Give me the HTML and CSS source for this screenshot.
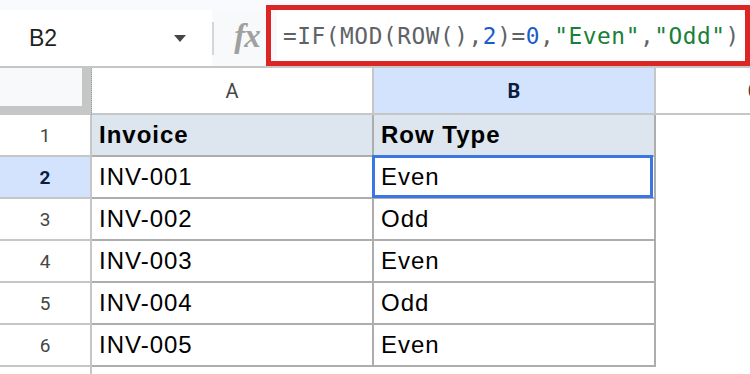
FILE: index.html
```html
<!DOCTYPE html>
<html lang="en">
<head>
    <meta charset="UTF-8">
    <meta name="viewport" content="width=device-width, initial-scale=1.0">
    <title>Row Type Formula</title>
    <link rel="stylesheet" href="styles.css">
</head>
<body>
    <div class="formula-bar">
        <div class="name-box">
            <span class="cell-ref">B2</span>
            <span class="caret"></span>
        </div>
        <div class="divider"></div>
        <div class="fx">fx</div>
        <div class="formula">
            <div class="formula-input">=IF(MOD(ROW(),<span class="num">2</span>)=<span class="num">0</span>,<span class="str">"Even"</span>,<span class="str">"Odd"</span>)</div>
        </div>
    </div>

    <div class="sheet">
        <div class="corner"><div class="corner-inner"></div></div>
        <div class="col-head">A</div>
        <div class="col-head active">B</div>
        <div class="col-head">C</div>

        <div class="row-head">1</div>
        <div class="cell title">Invoice</div>
        <div class="cell title">Row Type</div>
        <div class="blank"></div>

        <div class="row-head active">2</div>
        <div class="cell">INV-001</div>
        <div class="cell selected">Even</div>
        <div class="blank"></div>

        <div class="row-head">3</div>
        <div class="cell">INV-002</div>
        <div class="cell">Odd</div>
        <div class="blank"></div>

        <div class="row-head">4</div>
        <div class="cell">INV-003</div>
        <div class="cell">Even</div>
        <div class="blank"></div>

        <div class="row-head">5</div>
        <div class="cell">INV-004</div>
        <div class="cell">Odd</div>
        <div class="blank"></div>

        <div class="row-head">6</div>
        <div class="cell">INV-005</div>
        <div class="cell">Even</div>
        <div class="blank"></div>

        <div class="row-head"></div>
        <div class="blank"></div>
        <div class="blank"></div>
        <div class="blank"></div>
    </div>
</body>
</html>
```

FILE: styles.css
```css
* { box-sizing: border-box; }
body { margin: 0; width: 750px; height: 374px; overflow: hidden; background: #fff; font-family: "Liberation Sans", Arial, sans-serif; }

/* formula bar */
.formula-bar { display: flex; height: 68px; padding-top: 5px; background: #f8fafd; border-bottom: 2px solid #c4c7c5; }
.name-box { display: flex; align-items: center; width: 212px; height: 56px; margin-top: 5px; padding-left: 29px; background: #fff; }
.cell-ref { font-size: 23px; color: #1f1f1f; }
.caret { width: 0; height: 0; margin-left: 117px; border-left: 6px solid transparent; border-right: 6px solid transparent; border-top: 7px solid #444746; }
.divider { width: 2px; height: 33px; margin-top: 17px; background: #d3d7db; }
.fx { display: flex; align-items: center; justify-content: center; width: 52px; height: 56px; margin-top: 5px; padding: 0 0 4px 14px; background: #f8f9fa; font-family: "Liberation Serif", serif; font-style: italic; font-weight: bold; font-size: 33px; letter-spacing: -1px; color: #a0a0a0; }
.formula { flex: 1; height: 61px; border: 5px solid #dc2626; background: #f8f9fa; }
.formula-input { display: flex; align-items: center; height: 100%; margin-left: 6px; padding-left: 6px; background: #fff; font-family: "DejaVu Sans Mono", monospace; font-size: 22.8px; letter-spacing: 0.55px; color: #5f6368; white-space: pre; }
.num { color: #1a5dc9; }
.str { color: #188038; }

/* grid */
.sheet { display: grid; grid-template-columns: 92px 282px 282px 198px; grid-template-rows: 47px repeat(6, 42px) 20px; }
.corner { background: #c4c7c5; border-right: 1px dotted #9a9a9a; }
.corner-inner { width: 82px; height: 38px; background: #f8f9fa; }
.col-head { display: flex; align-items: center; justify-content: center; border-right: 2px solid #c4c7c5; border-bottom: 2px solid #c4c7c5; font-family: Roboto, "Liberation Sans", sans-serif; font-size: 20px; color: #444746; }
.col-head.active { background: #d3e3fd; color: #0b1d3f; font-weight: bold; }
.row-head { display: flex; align-items: center; justify-content: center; border-right: 2px solid #c4c7c5; border-bottom: 2px solid #c4c7c5; font-family: Roboto, "Liberation Sans", sans-serif; font-size: 19px; color: #444746; }
.row-head.active { background: #d3e3fd; color: #0b1d3f; font-weight: bold; }
.cell { position: relative; display: flex; align-items: center; padding-left: 7px; border-right: 2px solid #adadad; border-bottom: 2px solid #adadad; font-size: 24px; letter-spacing: 1px; color: #000; }
.cell.title { background: #dde5ef; font-weight: bold; }
.cell.selected::after { content: ""; position: absolute; top: -2px; left: -2px; right: 1px; bottom: -1px; border: 3px solid #3a76e4; }
.blank { background: #fff; }
```
